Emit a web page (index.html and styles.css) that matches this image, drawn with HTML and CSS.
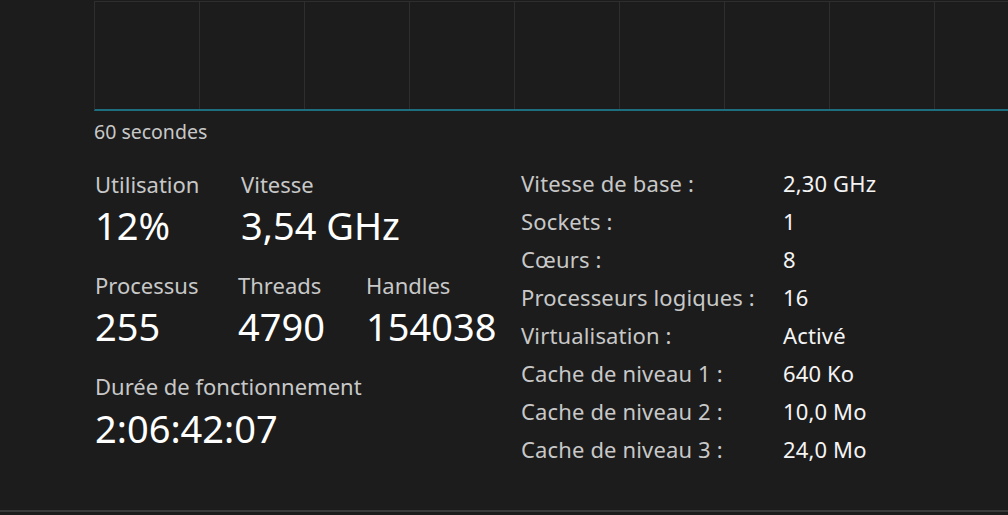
FILE: index.html
```html
<!DOCTYPE html>
<html lang="fr">
<head>
<meta charset="utf-8">
<title>Processeur</title>
<link rel="stylesheet" href="styles.css">
</head>
<body>
<div class="page">
  <div class="graph"></div>
  <div class="axis">60 secondes</div>
  <div class="details">
    <div class="stats">
      <div class="row row1">
        <div class="stat w-util"><div class="label">Utilisation</div><div class="value">12%</div></div>
        <div class="stat"><div class="label">Vitesse</div><div class="value">3,54 GHz</div></div>
      </div>
      <div class="row row2">
        <div class="stat w-proc"><div class="label">Processus</div><div class="value">255</div></div>
        <div class="stat w-thr"><div class="label">Threads</div><div class="value">4790</div></div>
        <div class="stat"><div class="label">Handles</div><div class="value">154038</div></div>
      </div>
      <div class="row row3">
        <div class="stat"><div class="label">Durée de fonctionnement</div><div class="value">2:06:42:07</div></div>
      </div>
    </div>
    <div class="specs">
      <div class="spec"><span class="k">Vitesse de base :</span><span class="v">2,30 GHz</span></div>
      <div class="spec"><span class="k">Sockets :</span><span class="v">1</span></div>
      <div class="spec"><span class="k">Cœurs :</span><span class="v">8</span></div>
      <div class="spec"><span class="k">Processeurs logiques :</span><span class="v">16</span></div>
      <div class="spec"><span class="k">Virtualisation :</span><span class="v">Activé</span></div>
      <div class="spec"><span class="k">Cache de niveau 1 :</span><span class="v">640 Ko</span></div>
      <div class="spec"><span class="k">Cache de niveau 2 :</span><span class="v">10,0 Mo</span></div>
      <div class="spec"><span class="k">Cache de niveau 3 :</span><span class="v">24,0 Mo</span></div>
    </div>
  </div>
  <div class="bottom-rule"></div>
</div>
</body>
</html>
```

FILE: styles.css
```css
html, body {
  margin: 0;
  padding: 0;
  background: #1c1c1c;
}
body {
  width: 1008px;
  height: 515px;
  overflow: hidden;
  font-family: "Noto Sans", "Open Sans", "DejaVu Sans", sans-serif;
  color: #c8c8c8;
}
.page {
  display: flex;
  flex-direction: column;
  height: 515px;
  padding-top: 1px;
  box-sizing: border-box;
}
.graph {
  margin-left: 94px;
  height: 107px;
  border-top: 1px solid #2e2e2e;
  border-left: 1px solid #2e2e2e;
  border-bottom: 2px solid #1d6f80;
  background-image: repeating-linear-gradient(to right,
    transparent 0, transparent 104px, #2e2e2e 104px, #2e2e2e 105px);
}
.axis {
  margin-left: 94px;
  margin-top: 9px;
  font-size: 19.5px;
  line-height: 24px;
  color: #c8c8c8;
}
.details {
  display: flex;
  margin-top: 20px;
}
.stats {
  width: 426px;
  padding-left: 95px;
  padding-top: 7px;
  display: flex;
  flex-direction: column;
}
.row {
  display: flex;
}
.row2 { margin-top: 24px; }
.row3 { margin-top: 24px; }
.row3 .stat { gap: 6px; }
.w-util { width: 146px; }
.w-proc { width: 143px; }
.w-thr { width: 128px; }
.stat {
  display: flex;
  flex-direction: column;
  gap: 5px;
}
.label {
  font-size: 22px;
  line-height: 26px;
  color: #c8c8c8;
}
.value {
  font-size: 38px;
  line-height: 46px;
  color: #ffffff;
}
.specs {
  display: flex;
  flex-direction: column;
}
.spec {
  display: flex;
  font-size: 22px;
  line-height: 38px;
  letter-spacing: 0.15px;
}
.spec .k {
  width: 262px;
  color: #c8c8c8;
}
.spec .v {
  color: #f4f4f4;
}
.bottom-rule {
  margin-top: auto;
  margin-bottom: 3px;
  height: 2px;
  background: #3a3a3a;
}
```
